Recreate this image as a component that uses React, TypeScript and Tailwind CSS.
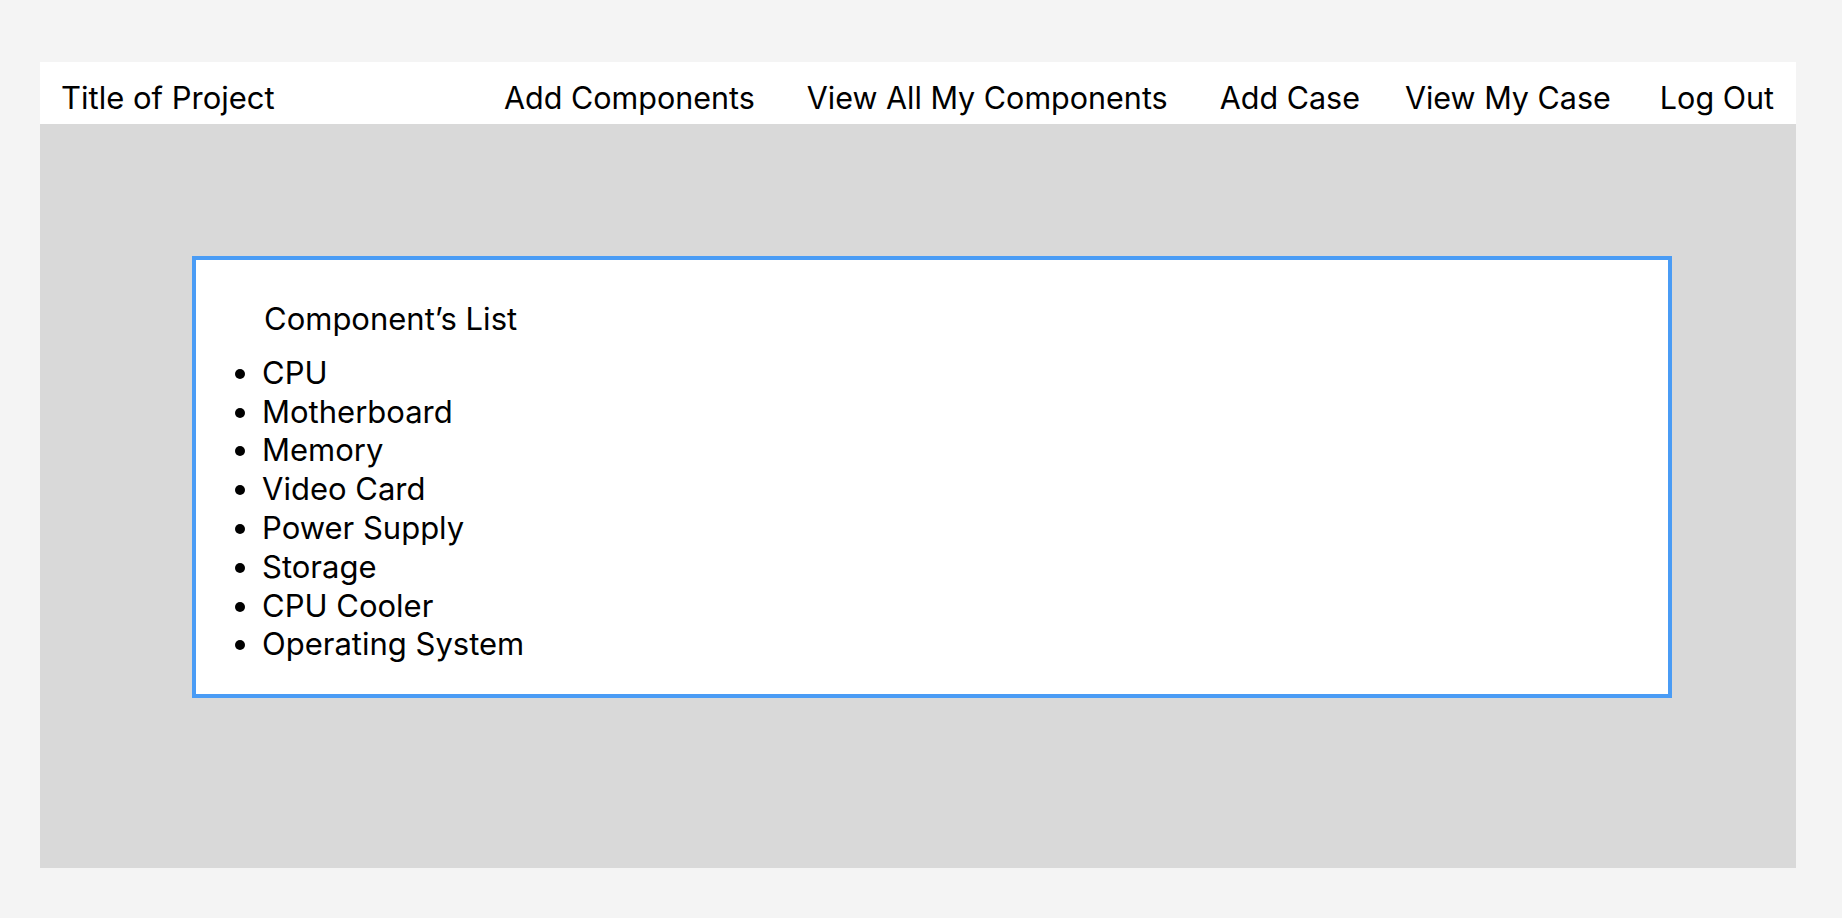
const navItems = [
  { label: "Add Components", gap: "" },
  { label: "View All My Components", gap: "ml-[52px]" },
  { label: "Add Case", gap: "ml-[52px]" },
  { label: "View My Case", gap: "ml-[45px]" },
  { label: "Log Out", gap: "ml-[49px]" },
];

const components = [
  "CPU",
  "Motherboard",
  "Memory",
  "Video Card",
  "Power Supply",
  "Storage",
  "CPU Cooler",
  "Operating System",
];

const App = () => {
  return (
    <div
      className="w-full min-h-screen bg-[#f4f4f4] pt-[62px] pl-[40px] text-black"
      style={{ fontFamily: "Inter, 'Noto Sans', sans-serif" }}
    >
      <div className="w-[1756px] h-[806px] flex flex-col bg-[#d9d9d9]">
        {/* Header */}
        <header className="h-[62px] bg-white flex items-start pt-[17px] pl-[21px] pr-[22px] text-[30.5px] leading-[38px]">
          <div className="text-[31px]">Title of Project</div>
          <nav className="ml-auto flex">
            {navItems.map((item) => (
              <a key={item.label} href="#" className={`whitespace-nowrap ${item.gap}`}>
                {item.label}
              </a>
            ))}
          </nav>
        </header>

        {/* Content */}
        <div className="flex-1">
          <div className="ml-[152px] mt-[132px] w-[1480px] h-[442px] bg-white border-4 border-[#4a9cf5] pt-[40px] pl-[66px] text-[31px] leading-[38.8px]">
            <h2 className="pl-[2px] font-normal">Component’s List</h2>
            <ul className="list-disc mt-[15px]">
              {components.map((c) => (
                <li key={c}>{c}</li>
              ))}
            </ul>
          </div>
        </div>
      </div>
    </div>
  );
};

export default App;
